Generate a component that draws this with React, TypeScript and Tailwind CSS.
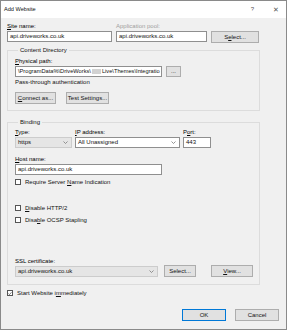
import React from "react";

const Label = ({ children, gray, className = "" }: { children?: React.ReactNode; gray?: boolean; className?: string }) => (
  <div className={`h-[8px] leading-[8px] mb-[1px] whitespace-nowrap ${gray ? "text-[#a0a0a0]" : "text-black"} ${className}`}>{children}</div>
);

const Input = ({ children, w, gray }: { children?: React.ReactNode; w: string; gray?: boolean }) => (
  <div className={`${w} h-[11px] border border-[#8f8f8f] ${gray ? "bg-[#e6e6e6]" : "bg-white"} px-[2px] leading-[9px] whitespace-nowrap overflow-hidden`}>{children}</div>
);

const Chevron = () => (
  <svg width="5" height="3" viewBox="0 0 5 3" className="shrink-0">
    <path d="M0.5 0.5 L2.5 2.5 L4.5 0.5" fill="none" stroke="#7a7a7a" strokeWidth="0.8" />
  </svg>
);

const Select = ({ children, w, gray }: { children?: React.ReactNode; w: string; gray?: boolean }) => (
  <div className={`${w} h-[11px] border ${gray ? "border-[#cccccc] bg-[#e5e5e5]" : "border-[#8f8f8f] bg-white"} pl-[2px] pr-[3px] flex items-center justify-between whitespace-nowrap overflow-hidden`}>
    <span className="leading-[9px]">{children}</span>
    <Chevron />
  </div>
);

const Button = ({ children, w, primary, h = "h-[12px]" }: { children?: React.ReactNode; w: string; primary?: boolean; h?: string }) => (
  <div className={`${w} ${h} ${primary ? "border-[1.5px] border-[#0078d7]" : "border border-[#adadad]"} bg-[#e1e1e1] flex items-center justify-center leading-[9px] whitespace-nowrap`}>{children}</div>
);

const Check = ({ checked, children, className = "" }: { checked?: boolean; children?: React.ReactNode; className?: string }) => (
  <div className={`flex items-center h-[8px] gap-[4px] ${className}`}>
    <div className="w-[6px] h-[6px] border border-[#555] bg-white flex items-center justify-center">
      {checked && (
        <svg width="5" height="5" viewBox="0 0 5 5">
          <path d="M0.6 2.6 L1.9 3.8 L4.4 0.9" fill="none" stroke="#333" strokeWidth="0.8" />
        </svg>
      )}
    </div>
    <span className="leading-[8px] whitespace-nowrap">{children}</span>
  </div>
);

const U = ({ children }: { children: React.ReactNode }) => <span className="underline underline-offset-[1px]">{children}</span>;

export default function App() {
  return (
    <div
      className="w-[287px] h-[330px] border border-[#8a8a8a] bg-[#f0f0f0] flex flex-col text-[6px] text-[#111] overflow-hidden"
      style={{ fontFamily: '"Liberation Sans", Arial, sans-serif' }}
    >
      {/* Title bar */}
      <div className="h-[17px] bg-white flex items-center pl-[3px] pr-[7px] shrink-0">
        <span className="text-[5.6px]">Add Website</span>
        <div className="flex-1" />
        <span className="text-[6px] text-[#555] mr-[19px]">?</span>
        <span className="text-[6.5px] text-[#555]">✕</span>
      </div>

      {/* Body */}
      <div className="flex flex-col px-[6px]">
        {/* Row 1 */}
        <div className="flex mt-[4px] gap-[4px]">
          <div className="flex flex-col">
            <Label><U>S</U>ite name:</Label>
            <Input w="w-[105px]">api.driveworks.co.uk</Input>
          </div>
          <div className="flex flex-col">
            <Label gray>Application pool:</Label>
            <Input w="w-[91px]">api.driveworks.co.uk</Input>
          </div>
          <div className="flex flex-col">
            <Label />
            <Button w="w-[48px]">S<U>e</U>lect...</Button>
          </div>
        </div>

        {/* Content Directory */}
        <fieldset className="w-[253px] mt-[4px] border border-[#dcdcdc] pl-[7px] pb-[6px]">
          <legend className="ml-[3px] px-[2px] leading-[7px]">Content Directory</legend>
          <div className="flex gap-[4px] mt-[3px]">
            <div className="flex flex-col">
              <Label><U>P</U>hysical path:</Label>
              <Input w="w-[147px]">
                <span className="text-[5.7px]">
                  \ProgramData%\DriveWorks\
                  <span className="inline-block w-[9px] h-[5px] bg-[#d2d2d2] align-middle mx-[1px] blur-[0.5px]" />
                  Live\Themes\Integratio
                </span>
              </Input>
            </div>
            <div className="flex flex-col">
              <Label />
              <Button w="w-[15px]" h="h-[11px]">...</Button>
            </div>
          </div>
          <div className="leading-[8px] mt-[1px]">Pass-through authentication</div>
          <div className="flex gap-[10px] mt-[6px]">
            <Button w="w-[41px]"><U>C</U>onnect as...</Button>
            <Button w="w-[43px]">Test Settings...</Button>
          </div>
        </fieldset>

        {/* Binding */}
        <fieldset className="w-[253px] mt-[8px] border border-[#dcdcdc] pl-[7px] pb-[7px]">
          <legend className="ml-[3px] px-[2px] leading-[7px]">Binding</legend>
          <div className="flex gap-[3px] mt-[2px]">
            <div className="flex flex-col">
              <Label><U>T</U>ype:</Label>
              <Select w="w-[57px]" gray>https</Select>
            </div>
            <div className="flex flex-col">
              <Label><U>I</U>P address:</Label>
              <Select w="w-[105px]">All Unassigned</Select>
            </div>
            <div className="flex flex-col">
              <Label>P<U>o</U>rt:</Label>
              <Input w="w-[28px]">443</Input>
            </div>
          </div>
          <div className="flex flex-col mt-[7px]">
            <Label><U>H</U>ost name:</Label>
            <Input w="w-[147px]">api.driveworks.co.uk</Input>
          </div>
          <Check className="mt-[3px]">Require Server <U>N</U>ame Indication</Check>
          <Check className="mt-[18px]"><U>D</U>isable HTTP/2</Check>
          <Check className="mt-[4px]">Disa<U>b</U>le OCSP Stapling</Check>
          <div className="flex items-end mt-[33px]">
            <div className="flex flex-col">
              <Label>SSL certificate:</Label>
              <Select w="w-[143px]" gray>api.driveworks.co.uk</Select>
            </div>
            <div className="ml-[6px]">
              <Button w="w-[32px]">Select...</Button>
            </div>
            <div className="ml-[15px]">
              <Button w="w-[42px]"><U>V</U>iew...</Button>
            </div>
          </div>
        </fieldset>

        <Check checked className="mt-[4px]">Start Website i<U>m</U>mediately</Check>

        <div className="flex justify-end gap-[9px] mt-[12px] mr-[1px]">
          <Button w="w-[44px]" primary>OK</Button>
          <Button w="w-[44px]">Cancel</Button>
        </div>
      </div>
    </div>
  );
}
